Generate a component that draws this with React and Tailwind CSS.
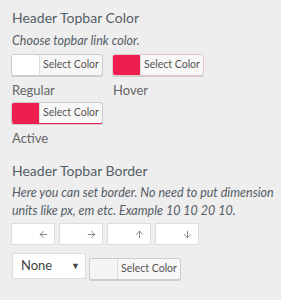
import { ArrowLeft, ArrowRight, ArrowUp, ArrowDown } from "lucide-react";

export default function App() {
  const ColorBtn = ({ color, white, active }) => (
    <div className={`flex h-[22px] w-[92px] overflow-hidden rounded-[3px] border ${active ? "border-[#ccc] border-b-[#ee1f50]" : color ? "border-[#e3c8d0]" : "border-[#ccc]"} bg-[#f7f7f7] shadow-[0_1px_0_#ccc]`}>
      <div className={`w-[28px] border-r border-[#ddd] ${color ? "bg-[#ee1f50]" : white ? "bg-white" : "bg-[#f5f5f5]"}`} />
      <div className="flex flex-1 items-center justify-center text-[10.5px] text-[#555]">Select Color</div>
    </div>
  );
  const arrows = [ArrowLeft, ArrowRight, ArrowUp, ArrowDown];
  return (
    <div className="min-h-[300px] w-[281px] bg-[#eeeeee] pl-[11px] pt-[8px] text-[#555d66]" style={{ fontFamily: 'Lato, "Open Sans", sans-serif' }}>
      <div className="pl-[1px] text-[14px] leading-[20px]">Header Topbar Color</div>
      <div className="mt-[4px] pl-[1px] text-[12.5px] italic leading-[18px]">Choose topbar link color.</div>
      <div className="mt-[4px] flex">
        <div className="w-[101px]">
          <ColorBtn white />
          <div className="mt-[5px] pl-[1px] text-[13px] leading-[18px] text-[#666]">Regular</div>
        </div>
        <div className="w-[101px]">
          <ColorBtn color />
          <div className="mt-[5px] pl-[1px] text-[13px] leading-[18px] text-[#666]">Hover</div>
        </div>
      </div>
      <div className="mt-[3px]">
        <ColorBtn color active />
        <div className="mt-[5px] pl-[1px] text-[13px] leading-[18px] text-[#666]">Active</div>
      </div>
      <div className="mt-[14px] pl-[1px] text-[14px] leading-[20px]">Header Topbar Border</div>
      <div className="mt-[3px] w-[270px] pl-[1px] text-[12.5px] italic leading-[18px]">Here you can set border. No need to put dimension units like px, em etc. Example 10 10 20 10.</div>
      <div className="mt-[3px] flex gap-[4px]">
        {arrows.map((A, i) => (
          <div key={i} className="flex h-[22px] w-[44px] items-center justify-end border border-[#ddd] bg-white pr-[5px] text-[#555]">
            <A size={11} strokeWidth={1.5} />
          </div>
        ))}
      </div>
      <div className="mt-[8px] flex items-start">
        <div className="ml-[1px] flex h-[26px] w-[74px] items-center justify-between border border-[#ddd] bg-white pl-[8px] pr-[5px] text-[13px] text-[#444]">
          <span>None</span>
          <span className="text-[9px]">▼</span>
        </div>
        <div className="ml-[3px] mt-[5px]">
          <ColorBtn />
        </div>
      </div>
    </div>
  );
}
